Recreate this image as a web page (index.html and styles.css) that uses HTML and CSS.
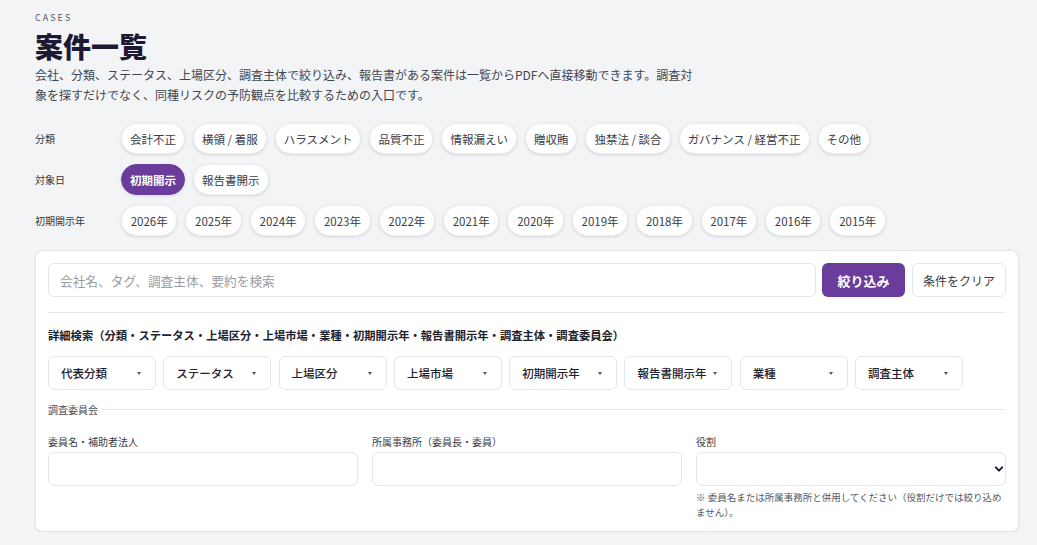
FILE: index.html
```html
<!DOCTYPE html>
<html lang="ja">
<head>
  <meta charset="UTF-8" />
  <meta name="viewport" content="width=device-width, initial-scale=1.0"/>
  <title>案件一覧</title>
  <link rel="stylesheet" href="styles.css">
</head>
<body>

<main class="page">
  <!-- Header -->
  <header class="page-head">
    <div class="eyebrow">CASES</div>
    <h1>案件一覧</h1>
    <p class="lead">会社、分類、ステータス、上場区分、調査主体で絞り込み、報告書がある案件は一覧からPDFへ直接移動できます。調査対象を探すだけでなく、同種リスクの予防観点を比較するための入口です。</p>
  </header>

  <!-- Quick filters -->
  <section class="quick-filters">
    <div class="filter-row">
      <div class="filter-label">分類</div>
      <div class="chips">
        <button class="chip">会計不正</button>
        <button class="chip">横領 / 着服</button>
        <button class="chip">ハラスメント</button>
        <button class="chip">品質不正</button>
        <button class="chip">情報漏えい</button>
        <button class="chip">贈収賄</button>
        <button class="chip">独禁法 / 談合</button>
        <button class="chip">ガバナンス / 経営不正</button>
        <button class="chip">その他</button>
      </div>
    </div>
    <div class="filter-row">
      <div class="filter-label">対象日</div>
      <div class="chips">
        <button class="chip active">初期開示</button>
        <button class="chip">報告書開示</button>
      </div>
    </div>
    <div class="filter-row">
      <div class="filter-label">初期開示年</div>
      <div class="chips years">
        <button class="chip">2026年</button>
        <button class="chip">2025年</button>
        <button class="chip">2024年</button>
        <button class="chip">2023年</button>
        <button class="chip">2022年</button>
        <button class="chip">2021年</button>
        <button class="chip">2020年</button>
        <button class="chip">2019年</button>
        <button class="chip">2018年</button>
        <button class="chip">2017年</button>
        <button class="chip">2016年</button>
        <button class="chip">2015年</button>
      </div>
    </div>
  </section>

  <!-- Search card -->
  <section class="card">
    <form class="search-bar">
      <input type="text" class="search-input" placeholder="会社名、タグ、調査主体、要約を検索" />
      <button type="submit" class="btn btn-primary">絞り込み</button>
      <button type="button" class="btn btn-ghost">条件をクリア</button>
    </form>

    <div class="advanced">
      <h3>詳細検索（分類・ステータス・上場区分・上場市場・業種・初期開示年・報告書開示年・調査主体・調査委員会）</h3>
      <div class="dropdowns">
        <button class="dropdown">代表分類<span class="caret"></span></button>
        <button class="dropdown">ステータス<span class="caret"></span></button>
        <button class="dropdown">上場区分<span class="caret"></span></button>
        <button class="dropdown">上場市場<span class="caret"></span></button>
        <button class="dropdown">初期開示年<span class="caret"></span></button>
        <button class="dropdown">報告書開示年<span class="caret"></span></button>
        <button class="dropdown">業種<span class="caret"></span></button>
        <button class="dropdown">調査主体<span class="caret"></span></button>
      </div>

      <fieldset class="committee">
        <legend>調査委員会</legend>
        <div class="field-grid">
          <label class="field">
            <span class="field-label">委員名・補助者法人</span>
            <input type="text" class="text-input" />
          </label>
          <label class="field">
            <span class="field-label">所属事務所（委員長・委員）</span>
            <input type="text" class="text-input" />
          </label>
          <label class="field">
            <span class="field-label">役割</span>
            <span class="select-wrap">
              <select class="text-input select">
                <option value=""></option>
                <option value="chair">委員長</option>
                <option value="member">委員</option>
              </select>
              <svg class="chev" width="10" height="10" viewBox="0 0 10 10"><path d="M1.8 3.4 L5 6.6 L8.2 3.4" fill="none" stroke="#1f1d36" stroke-width="2" stroke-linecap="round" stroke-linejoin="round"/></svg>
            </span>
            <span class="hint">※ 委員名または所属事務所と併用してください（役割だけでは絞り込めません）。</span>
          </label>
        </div>
      </fieldset>
    </div>
  </section>
</main>

</body>
</html>
```

FILE: styles.css
```css
body, html {
  font-family: 'Noto Sans CJK JP', 'Noto Sans', sans-serif;
  margin: 0;
  background: #f3f4f6;
  color: #2b2b3a;
}

.page {
  padding: 12px 18px 0 35px;
}

.eyebrow {
  font-size: 9px;
  line-height: 12px;
  letter-spacing: 2px;
  color: #555a66;
}

h1 {
  margin: 4px 0 0;
  font-size: 28px;
  line-height: 36px;
  font-weight: 800;
  color: #1c1a33;
}

.lead {
  margin: 1px 0 0;
  max-width: 666px;
  font-size: 12px;
  line-height: 20px;
  color: #44464f;
}

.quick-filters {
  margin-top: 18px;
  display: flex;
  flex-direction: column;
  gap: 10px;
}

.filter-row {
  display: flex;
  align-items: center;
}

.filter-label {
  width: 86px;
  flex-shrink: 0;
  font-size: 10px;
  color: #333540;
}

.chips {
  display: flex;
  flex-wrap: wrap;
  gap: 8px;
}

.chip {
  height: 31px;
  padding: 0 8px;
  border: 1px solid #eceef1;
  border-radius: 999px;
  background: #ffffff;
  box-shadow: 0 1px 3px rgba(0, 0, 0, 0.12);
  font-family: inherit;
  font-size: 11.5px;
  color: #3a3c46;
  cursor: pointer;
}

.years .chip {
  padding: 0 8.7px;
}

.chip.active {
  background: #6a3c9c;
  border-color: #6a3c9c;
  color: #ffffff;
  font-weight: bold;
}

.card {
  margin-top: 14px;
  width: 958px;
  padding: 12px 12px 11px;
  background: #ffffff;
  border: 1px solid #e3e5e9;
  border-radius: 8px;
  box-shadow: 0 1px 3px rgba(0, 0, 0, 0.06);
}

.search-bar {
  display: flex;
  gap: 6px;
}

.search-input {
  flex: 1;
  height: 34px;
  box-sizing: border-box;
  padding: 0 11px;
  border: 1px solid #e3e5e9;
  border-radius: 6px;
  font-family: inherit;
  font-size: 12.7px;
  color: #333;
}

.search-input::placeholder {
  color: #9a9ca4;
}

.btn {
  height: 34px;
  border-radius: 6px;
  font-family: inherit;
  cursor: pointer;
}

.btn-primary {
  width: 83px;
  background: #6a3c9c;
  border: none;
  color: #fff;
  font-size: 13px;
  font-weight: bold;
}

.btn-ghost {
  width: 94px;
  margin-left: 1px;
  background: #fff;
  border: 1px solid #e3e5e9;
  color: #3a3c46;
  font-size: 12px;
}

.advanced {
  margin-top: 15px;
  border-top: 1px solid #e6e8eb;
}

.advanced h3 {
  margin: 13px 0 0;
  font-size: 11.3px;
  line-height: 18px;
  font-weight: bold;
  color: #22222e;
}

.dropdowns {
  margin-top: 12px;
  display: flex;
  gap: 7.3px;
}

.dropdown {
  width: 108px;
  height: 34px;
  padding: 0 14px 0 12px;
  display: flex;
  align-items: center;
  justify-content: space-between;
  background: #fff;
  border: 1px solid #e3e5e9;
  border-radius: 6px;
  font-family: inherit;
  font-size: 11.5px;
  font-weight: 500;
  color: #22222e;
}

.caret {
  width: 0;
  height: 0;
  border-left: 2px solid transparent;
  border-right: 2px solid transparent;
  border-top: 3px solid #55575f;
}

.committee {
  margin: 12px 0 0;
  padding: 0;
  border: none;
  border-top: 1px solid #e6e8eb;
}

.committee legend {
  padding: 0 4px 0 0;
  font-size: 10px;
  color: #4a4c56;
}

.field-grid {
  margin-top: 18px;
  display: grid;
  grid-template-columns: repeat(3, 1fr);
  gap: 14px;
}

.field {
  display: flex;
  flex-direction: column;
}

.field-label {
  font-size: 10px;
  line-height: 14px;
  color: #3a3c46;
  margin-bottom: 3px;
}

.text-input {
  width: 100%;
  height: 34px;
  box-sizing: border-box;
  padding: 0 10px;
  border: 1px solid #e3e5e9;
  border-radius: 6px;
  background: #fff;
  font-family: inherit;
  font-size: 12px;
}

.select-wrap {
  position: relative;
  display: block;
}

.select {
  appearance: none;
  -webkit-appearance: none;
}

.chev {
  position: absolute;
  right: 2px;
  top: 12px;
  pointer-events: none;
}

.hint {
  margin-top: 4px;
  font-size: 9.5px;
  line-height: 15px;
  color: #55575f;
}
```
